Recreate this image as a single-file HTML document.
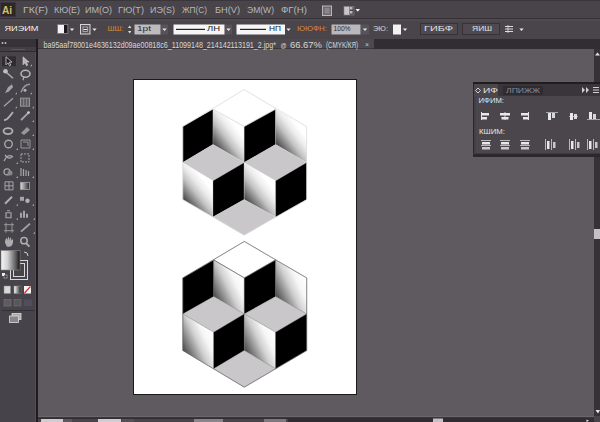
<!DOCTYPE html>
<html><head><meta charset="utf-8">
<style>
*{margin:0;padding:0;box-sizing:border-box}
html,body{width:600px;height:422px;overflow:hidden;background:#5e5a5f;font-family:"Liberation Sans",sans-serif;}
.a{position:absolute}
.t{position:absolute;white-space:nowrap;transform-origin:0 0}
#menubar{left:0;top:0;width:600px;height:18px;background:#48444a;border-top:1px solid #3a363b}
#mline{left:0;top:18px;width:600px;height:3px;background:#4e4a50;border-top:1px solid #353136}
#ctrl{left:0;top:21px;width:600px;height:18px;background:#49454b}
#tabbar{left:38px;top:39px;width:562px;height:10px;background:#312d32}
#tab{left:38px;top:39px;width:336px;height:10px;background:#4d494f;border-bottom:1px solid #3a363b}
#tools{left:0;top:39px;width:36px;height:383px;background:#47434a;border-right:1px solid #524e54}
#toolsb{left:36px;top:39px;width:2px;height:383px;background:#1f1c20}
#toolshead{left:0;top:39px;width:36px;height:8px;background:#363238}
#toolsgrip{left:0;top:47px;width:36px;height:5px;background:#423e43;border-bottom:1px solid #2e2a2f}
#scroll{left:594px;top:49px;width:6px;height:369px;background:#353136}
#thumb{left:594px;top:229px;width:6px;height:10px;background:#c4c2c4}
#status{left:38px;top:416px;width:556px;height:6px;background:#3a363b;border-top:1px solid #2a262b}
#bleed{left:130px;top:75px;width:230px;height:322px;border:1px solid #6c686d}
#artboard{left:133px;top:79px;width:224px;height:316px;background:#fff;border:1px solid #1a1a1a}
#panel{left:473px;top:82px;width:127px;height:75px;background:#444046;border-left:1px solid #2a262b}
#ptop{left:473px;top:82px;width:127px;height:2px;background:#201d21}
#phead{left:474px;top:84px;width:126px;height:12px;background:#39353a}
#ptab1{left:474px;top:84px;width:24px;height:12px;background:#4a464b}
#ptab2{left:503px;top:86px;width:40px;height:9px;background:#2f2b30}
#pbody{left:476px;top:96px;width:124px;height:57px;background:#4a464b}
#pbot{left:473px;top:153px;width:127px;height:4px;background:#2b282c;border-top:1px solid #3e3a3f}
.btn{position:absolute;background:#4f4b50;border:1px solid #353136;border-radius:1px}
.box{position:absolute;background:#c4c2c4}
.wbox{position:absolute;background:#f4f4f4}
.dd{position:absolute;background:#5a565b;border-left:1px solid #3a363b}
</style></head><body>
<div class="a" id="menubar"></div>
<div class="a" id="mline"></div>
<div class="a" id="ctrl"></div>
<div class="a" id="tabbar"></div>
<div class="a" id="tab"></div>
<div class="a" id="tools"></div>
<div class="a" id="toolsb"></div>
<div class="a" id="toolshead"></div>
<div class="a" id="toolsgrip"></div>
<svg class="a" style="left:0;top:0" width="40" height="422"><g opacity="0.82"><rect x="1.5" y="55.8" width="15" height="11" fill="#2b282c" stroke="#4a464b" stroke-width="1"/><path d="M6 56.8 v8 l2-2 1.5 3 1.3-0.7 -1.5-3 h2.7z" fill="#111" stroke="#ddd" stroke-width="0.9"/><path d="M23 56.8 v8 l2-2 1.5 3 1.3-0.7 -1.5-3 h2.7z" fill="#ccc" stroke="#eee" stroke-width="0.6"/><path d="M32 66.3 l-2 0 2 -2z" fill="#bbb"/><path d="M5 71.25 L13 78.25" stroke="#c4c4c4" stroke-width="1.6"/><circle cx="5.5" cy="71.25" r="2.3" fill="#ddd"/><ellipse cx="25.5" cy="73.75" rx="4.5" ry="3.5" fill="none" stroke="#ccc" stroke-width="1.6"/><path d="M24 76.25 l-1 4" stroke="#ccc" stroke-width="1.2"/><path d="M5 93.19999999999999 L8 87.19999999999999 L12 84.19999999999999 L13 87.19999999999999 L9 91.19999999999999z" fill="#bbb"/><path d="M21 92.19999999999999 q3 -8 9 -8" fill="none" stroke="#aaa" stroke-width="1.5"/><circle cx="25" cy="90.19999999999999" r="1.5" fill="#ccc"/><path d="M17 94.19999999999999 l-2 0 2 -2z" fill="#bbb"/><path d="M32 94.19999999999999 l-2 0 2 -2z" fill="#bbb"/><path d="M4 106.14999999999999 L13 98.14999999999999" stroke="#bbb" stroke-width="1.3"/><rect x="20.5" y="98.14999999999999" width="9" height="8" fill="#6a666b" stroke="#aaa" stroke-width="1"/><path d="M23.5 98.14999999999999 v8 M26.5 98.14999999999999 v8" stroke="#999" stroke-width="0.8"/><path d="M17 108.14999999999999 l-2 0 2 -2z" fill="#bbb"/><path d="M34 108.14999999999999 l-2 0 2 -2z" fill="#bbb"/><path d="M4 120.1 q3 0 5 -3 L13 112.1" fill="none" stroke="#c8c8c8" stroke-width="1.8"/><path d="M21 120.1 L29 112.1" stroke="#bbb" stroke-width="2"/><circle cx="28.5" cy="112.6" r="1.3" fill="#eee"/><path d="M34 122.1 l-2 0 2 -2z" fill="#bbb"/><ellipse cx="8" cy="131.05" rx="4.5" ry="3" fill="none" stroke="#c8c8c8" stroke-width="1.8"/><path d="M21 133.05 L27 127.05000000000001 L30 130.05 L24 135.05z" fill="#aaa"/><path d="M34 136.05 l-2 0 2 -2z" fill="#bbb"/><circle cx="8.5" cy="144.0" r="3.8" fill="none" stroke="#bbb" stroke-width="1.4"/><path d="M21 140.0 h9 v8 h-9z M23 142.0 h5 v4" fill="none" stroke="#aaa" stroke-width="1"/><path d="M18 150.0 l-2 0 2 -2z" fill="#bbb"/><path d="M34 150.0 l-2 0 2 -2z" fill="#bbb"/><path d="M4 160.95 q4 -8 9 -4 M5 154.95 q3 5 7 2" fill="none" stroke="#bbb" stroke-width="1.4"/><path d="M21 153.95 h8 v8 h-8z" fill="none" stroke="#bbb" stroke-width="1" stroke-dasharray="2 1"/><path d="M18 163.95 l-2 0 2 -2z" fill="#bbb"/><circle cx="7" cy="171.89999999999998" r="3" fill="none" stroke="#bbb" stroke-width="1.3"/><circle cx="10" cy="172.89999999999998" r="2.5" fill="#999"/><path d="M21 175.89999999999998 v-8 M23.5 175.89999999999998 v-7 M26 175.89999999999998 v-6 M28.5 175.89999999999998 v-5" stroke="#bbb" stroke-width="1.2"/><path d="M18 177.89999999999998 l-2 0 2 -2z" fill="#bbb"/><path d="M34 177.89999999999998 l-2 0 2 -2z" fill="#bbb"/><path d="M5 181.85 h8 v8 h-8z M5 185.85 h8 M9 181.85 v8" fill="none" stroke="#bbb" stroke-width="1"/><rect x="20.5" y="182.35" width="9" height="7" fill="url(#tg)" stroke="#bbb" stroke-width="0.8"/><path d="M5 203.8 L12 196.8" stroke="#c8c8c8" stroke-width="2"/><rect x="20" y="196.8" width="4" height="4" fill="#bbb"/><circle cx="27.5" cy="200.8" r="2.2" fill="#ccc"/><path d="M18 205.8 l-2 0 2 -2z" fill="#bbb"/><path d="M34 205.8 l-2 0 2 -2z" fill="#bbb"/><path d="M6 217.75 v-5 h5 v5z M7 210.75 h3" fill="none" stroke="#bbb" stroke-width="1.2"/><path d="M21 217.75 v-5 M24 217.75 v-7 M27 217.75 v-4" stroke="#c8c8c8" stroke-width="1.8"/><path d="M18 219.75 l-2 0 2 -2z" fill="#bbb"/><path d="M35 219.75 l-2 0 2 -2z" fill="#bbb"/><path d="M4 224.7 h10 M4 230.7 h10 M6 222.7 v10 M12 222.7 v10" stroke="#aaa" stroke-width="1"/><path d="M21 231.7 L30 223.7" stroke="#bbb" stroke-width="1.8"/><path d="M35 233.7 l-2 0 2 -2z" fill="#bbb"/><path d="M5 242.64999999999998 q0 -4 2 -5 v3 q1 -4 2 -4 v4 q1 -4 2 -3 v3 q1 -2 2 -1 v3 q-1 4 -4 4 h-2z" fill="#c4c4c4"/><circle cx="24" cy="240.64999999999998" r="3.2" fill="none" stroke="#c4c4c4" stroke-width="1.5"/><path d="M26 243.14999999999998 l3.5 3.5" stroke="#c4c4c4" stroke-width="2"/></g><linearGradient id="tg" x1="0" x2="1"><stop offset="0" stop-color="#fff"/><stop offset="1" stop-color="#222"/></linearGradient><linearGradient id="fg" x1="0" x2="1"><stop offset="0" stop-color="#f6f6f6"/><stop offset="0.35" stop-color="#d0d0d0"/><stop offset="0.8" stop-color="#555"/><stop offset="1" stop-color="#111"/></linearGradient><rect x="10.5" y="260.5" width="17" height="19" fill="none" stroke="#d8d8d8" stroke-width="1"/><rect x="13.5" y="263.5" width="11" height="13" fill="none" stroke="#d8d8d8" stroke-width="1"/><rect x="1" y="250.5" width="19" height="19.5" fill="url(#fg)" stroke="#888" stroke-width="0.6"/><path d="M24 252 q4 0 4 4" fill="none" stroke="#ccc" stroke-width="1"/><rect x="2" y="273" width="3" height="3" fill="#eee"/><rect x="4" y="275" width="3" height="3" fill="#333" stroke="#ddd" stroke-width="0.5"/><rect x="4" y="286" width="6.5" height="7.5" fill="#d8d8d8" stroke="#888" stroke-width="0.5"/><rect x="14" y="286" width="7" height="7.5" fill="url(#tg)" stroke="#888" stroke-width="0.5"/><rect x="24" y="286" width="7" height="7.5" fill="#f4f4f4"/><path d="M24.5 293 L30.5 286.5" stroke="#c33" stroke-width="1.2"/><rect x="4" y="299.5" width="7" height="6.5" fill="#5e5a60" stroke="#7a767b" stroke-width="0.6"/><rect x="14" y="299.5" width="7" height="6.5" fill="#5a565c" stroke="#747075" stroke-width="0.6"/><rect x="24" y="299.5" width="8" height="6.5" fill="#504e5c"/><path d="M2 310.5 h33" stroke="#333036" stroke-width="1"/><rect x="12" y="313.5" width="9" height="6" fill="#aaa" stroke="#ddd" stroke-width="0.8"/><rect x="9.5" y="316" width="9" height="6.5" fill="#888" stroke="#ddd" stroke-width="0.8"/><circle cx="2.5" cy="43" r="1" fill="#bbb"/><circle cx="5.5" cy="43" r="1" fill="#bbb"/><path d="M11 49.5 h14" stroke="#5a565b" stroke-width="1"/></svg>
<div class="a" id="scroll"></div>
<div class="a" id="thumb"></div>
<svg class="a" style="left:0;top:0" width="600" height="422"><rect x="38" y="416" width="562" height="6" fill="#48444a"/><rect x="38" y="416" width="556" height="1" fill="#6a666c"/><rect x="38" y="417.5" width="556" height="1.2" fill="#2a262b"/><rect x="288" y="418.5" width="306" height="3.5" fill="#302c31"/><rect x="41" y="419" width="22" height="3" fill="#cfcdcf"/><rect x="63" y="419" width="9" height="3" fill="#5b575c"/><rect x="98" y="419" width="23" height="3" fill="#cfcdcf"/><rect x="122" y="419" width="12" height="3" fill="#545055"/><rect x="194" y="419" width="29" height="3" fill="#bdbdbd" opacity="0.55"/><rect x="264" y="419" width="22" height="3" fill="#bdbdbd" opacity="0.45"/><rect x="433" y="418.5" width="10" height="3.5" fill="#c4c2c4"/><path d="M586.5 419.5 l2.5 1.3 -2.5 1.2z" fill="#e6e6e6"/><path d="M595 55.5 l2.5 -3 2.5 3z" fill="#e4e4e4"/><path d="M595.5 410 h4.5 l-2 3.5z" fill="#e6e6e6"/></svg>
<div class="a" id="artboard"></div>

<svg class="a" style="left:0;top:0" width="600" height="40"><rect x="57.5" y="24.5" width="10.5" height="9" fill="#f4f4f4" stroke="#777" stroke-width="0.8"/><rect x="64" y="25" width="3.6" height="8" fill="#1a1a1a"/><path d="M69.8 28.5 h4.4 l-2.2 2.6z" fill="#e6e6e6"/><rect x="80.5" y="24.5" width="9.5" height="9.5" fill="#5a565b" stroke="#d6d6d6" stroke-width="1"/><rect x="83" y="27" width="4.5" height="4.5" fill="#48444a" stroke="#bbb" stroke-width="0.8"/><rect x="83.5" y="29" width="3.5" height="1" fill="#eee"/><path d="M92.3 28.5 h4.4 l-2.2 2.6z" fill="#e6e6e6"/><path d="M128 28 l1.7 -2.4 1.7 2.4z M128 31 l1.7 2.4 1.7 -2.4z" fill="#ddd"/><rect x="134.5" y="24.5" width="26" height="10" fill="#bdbbbe"/><rect x="161" y="24.5" width="7" height="10" fill="#57535a"/><path d="M162.3 28.5 h4.4 l-2.2 2.6z" fill="#e6e6e6"/><rect x="173.5" y="24.5" width="51" height="10" fill="#f6f6f6"/><rect x="176" y="28.8" width="29" height="1.2" fill="#222"/><rect x="225" y="24.5" width="7" height="10" fill="#57535a"/><path d="M226.3 28.5 h4.4 l-2.2 2.6z" fill="#e6e6e6"/><rect x="236.5" y="24.5" width="48.5" height="10" fill="#f6f6f6"/><rect x="240" y="28.8" width="26" height="1.2" fill="#222"/><path d="M286.3 28.5 h4.4 l-2.2 2.6z" fill="#e6e6e6"/><rect x="331.5" y="24.5" width="29" height="10" fill="#bab8bb"/><rect x="361" y="24.5" width="8" height="10" fill="#57535a"/><path d="M362.8 28.5 h4.4 l-2.2 2.6z" fill="#e6e6e6"/><rect x="393" y="24.5" width="8" height="10" fill="#f2f2f2"/><path d="M402.8 28.5 h4.4 l-2.2 2.6z" fill="#e6e6e6"/><rect x="420.5" y="23.5" width="37" height="11" fill="#4e4a4f" stroke="#363237" stroke-width="1"/><rect x="462.5" y="23.5" width="37" height="11" fill="#4e4a4f" stroke="#363237" stroke-width="1"/><path d="M505 26.5 h8 M505 29 h8 M505 31.5 h8" stroke="#ddd" stroke-width="1"/><path d="M508 25 v8" stroke="#ddd" stroke-width="0.8"/><path d="M519.3 28.5 h4.4 l-2.2 2.6z" fill="#e6e6e6"/></svg>
<!-- menubar icons -->
<div class="a" style="left:0;top:2px;width:16px;height:15px;background:#2e2722;border:1px solid #3b3245"></div>
<div class="t" style="left:2px;top:3.5px;font-size:11.5px;line-height:12px;font-weight:bold;color:#d2c070;transform:scaleX(0.88)">Ai</div>
<svg class="a" style="left:0;top:0" width="400" height="20">
<rect x="322.5" y="6" width="9" height="9.5" fill="#6e6a70" stroke="#b8b8b8" stroke-width="1"/>
<rect x="324.5" y="8" width="5" height="5.5" fill="#8a868b"/>
<rect x="344" y="6.5" width="5.5" height="8.5" fill="#c8c6c8"/>
<rect x="350" y="7" width="2.5" height="2.5" fill="#bbb"/><rect x="350" y="11" width="2.5" height="2.5" fill="#bbb"/>
<rect x="344" y="6.5" width="10" height="8.5" fill="none" stroke="#8a868b" stroke-width="0.6"/>
<path d="M355.5 9 h4.5 l-2.25 2.8z" fill="#f0f0f0"/>
</svg>

<svg class="a" style="left:0;top:0" width="600" height="422" viewBox="0 0 600 422">
<defs><linearGradient id="ta" gradientUnits="userSpaceOnUse" x1="213.00" y1="144.50" x2="242.02" y2="122.90"><stop offset="0" stop-color="#404040"/><stop offset="0.2" stop-color="#828282"/><stop offset="0.4" stop-color="#c4c4c4"/><stop offset="0.6" stop-color="#ebebeb"/><stop offset="0.8" stop-color="#fff"/></linearGradient><linearGradient id="tb" gradientUnits="userSpaceOnUse" x1="275.60" y1="144.50" x2="304.43" y2="122.90"><stop offset="0" stop-color="#404040"/><stop offset="0.2" stop-color="#828282"/><stop offset="0.4" stop-color="#c4c4c4"/><stop offset="0.6" stop-color="#ebebeb"/><stop offset="0.8" stop-color="#fff"/></linearGradient><linearGradient id="tc" gradientUnits="userSpaceOnUse" x1="182.80" y1="199.60" x2="210.89" y2="177.04"><stop offset="0" stop-color="#404040"/><stop offset="0.2" stop-color="#828282"/><stop offset="0.4" stop-color="#c4c4c4"/><stop offset="0.6" stop-color="#ebebeb"/><stop offset="0.8" stop-color="#fff"/></linearGradient><linearGradient id="td" gradientUnits="userSpaceOnUse" x1="244.20" y1="199.60" x2="273.40" y2="177.04"><stop offset="0" stop-color="#404040"/><stop offset="0.2" stop-color="#828282"/><stop offset="0.4" stop-color="#c4c4c4"/><stop offset="0.6" stop-color="#ebebeb"/><stop offset="0.8" stop-color="#fff"/></linearGradient><linearGradient id="ba" gradientUnits="userSpaceOnUse" x1="213.70" y1="296.50" x2="244.30" y2="281.62"><stop offset="0" stop-color="#484848"/><stop offset="0.25" stop-color="#8c8c8c"/><stop offset="0.5" stop-color="#d0d0d0"/><stop offset="0.75" stop-color="#f6f6f6"/><stop offset="1" stop-color="#fff"/></linearGradient><linearGradient id="bb" gradientUnits="userSpaceOnUse" x1="275.60" y1="296.50" x2="306.70" y2="281.62"><stop offset="0" stop-color="#484848"/><stop offset="0.25" stop-color="#8c8c8c"/><stop offset="0.5" stop-color="#d0d0d0"/><stop offset="0.75" stop-color="#f6f6f6"/><stop offset="1" stop-color="#fff"/></linearGradient><linearGradient id="bc" gradientUnits="userSpaceOnUse" x1="182.80" y1="350.50" x2="213.70" y2="335.94"><stop offset="0" stop-color="#484848"/><stop offset="0.25" stop-color="#8c8c8c"/><stop offset="0.5" stop-color="#d0d0d0"/><stop offset="0.75" stop-color="#f6f6f6"/><stop offset="1" stop-color="#fff"/></linearGradient><linearGradient id="bd" gradientUnits="userSpaceOnUse" x1="244.30" y1="350.50" x2="275.60" y2="335.94"><stop offset="0" stop-color="#484848"/><stop offset="0.25" stop-color="#8c8c8c"/><stop offset="0.5" stop-color="#d0d0d0"/><stop offset="0.75" stop-color="#f6f6f6"/><stop offset="1" stop-color="#fff"/></linearGradient></defs>
<polygon points="244.20,89.50 275.60,109.20 244.20,126.50 213.00,109.20" fill="#fff" stroke="#d8d8d8" stroke-opacity="0.55" stroke-width="0.48" stroke-linejoin="round"/><polygon points="182.80,126.50 213.00,109.20 213.00,144.50 182.80,162.60" fill="#000" stroke="#d8d8d8" stroke-opacity="0.55" stroke-width="0.48" stroke-linejoin="round"/><polygon points="213.00,109.20 244.20,126.50 244.20,162.60 213.00,144.50" fill="url(#ta)" stroke="#d8d8d8" stroke-opacity="0.55" stroke-width="0.48" stroke-linejoin="round"/><polygon points="244.20,126.50 275.60,109.20 275.60,144.50 244.20,162.60" fill="#000" stroke="#d8d8d8" stroke-opacity="0.55" stroke-width="0.48" stroke-linejoin="round"/><polygon points="275.60,109.20 306.60,126.50 306.60,162.60 275.60,144.50" fill="url(#tb)" stroke="#d8d8d8" stroke-opacity="0.55" stroke-width="0.48" stroke-linejoin="round"/><polygon points="213.00,144.50 244.20,162.60 213.00,180.80 182.80,162.60" fill="#c9c7ca" stroke="#d8d8d8" stroke-opacity="0.55" stroke-width="0.48" stroke-linejoin="round"/><polygon points="275.60,144.50 306.60,162.60 275.60,180.80 244.20,162.60" fill="#c9c7ca" stroke="#d8d8d8" stroke-opacity="0.55" stroke-width="0.48" stroke-linejoin="round"/><polygon points="182.80,162.60 213.00,180.80 213.00,217.10 182.80,199.60" fill="url(#tc)" stroke="#d8d8d8" stroke-opacity="0.55" stroke-width="0.48" stroke-linejoin="round"/><polygon points="213.00,180.80 244.20,162.60 244.20,199.60 213.00,217.10" fill="#000" stroke="#d8d8d8" stroke-opacity="0.55" stroke-width="0.48" stroke-linejoin="round"/><polygon points="244.20,162.60 275.60,180.80 275.60,217.10 244.20,199.60" fill="url(#td)" stroke="#d8d8d8" stroke-opacity="0.55" stroke-width="0.48" stroke-linejoin="round"/><polygon points="275.60,180.80 306.60,162.60 306.60,199.60 275.60,217.10" fill="#000" stroke="#d8d8d8" stroke-opacity="0.55" stroke-width="0.48" stroke-linejoin="round"/><polygon points="244.20,199.60 275.60,217.10 244.20,235.20 213.00,217.10" fill="#c9c7ca" stroke="#d8d8d8" stroke-opacity="0.55" stroke-width="0.48" stroke-linejoin="round"/><polygon points="244.20,89.50 306.60,126.50 306.60,199.60 244.20,235.20 182.80,199.60 182.80,126.50" fill="none" stroke="#d8d8d8" stroke-width="0.6"/><polyline points="213.00,109.20 244.20,126.50 275.60,109.20" fill="none" stroke="#d8d8d8" stroke-width="0.6"/><polygon points="244.30,241.40 275.60,259.90 244.30,277.90 213.70,259.90" fill="#fff" stroke="#5a5a5a" stroke-opacity="0.55" stroke-width="0.48" stroke-linejoin="round"/><polygon points="182.80,277.90 213.70,259.90 213.70,296.50 182.80,314.00" fill="#000" stroke="#5a5a5a" stroke-opacity="0.55" stroke-width="0.48" stroke-linejoin="round"/><polygon points="213.70,259.90 244.30,277.90 244.30,314.00 213.70,296.50" fill="url(#ba)" stroke="#5a5a5a" stroke-opacity="0.55" stroke-width="0.48" stroke-linejoin="round"/><polygon points="244.30,277.90 275.60,259.90 275.60,296.50 244.30,314.00" fill="#000" stroke="#5a5a5a" stroke-opacity="0.55" stroke-width="0.48" stroke-linejoin="round"/><polygon points="275.60,259.90 306.70,277.90 306.70,314.00 275.60,296.50" fill="url(#bb)" stroke="#5a5a5a" stroke-opacity="0.55" stroke-width="0.48" stroke-linejoin="round"/><polygon points="213.70,296.50 244.30,314.00 213.70,332.30 182.80,314.00" fill="#c9c7ca" stroke="#5a5a5a" stroke-opacity="0.55" stroke-width="0.48" stroke-linejoin="round"/><polygon points="275.60,296.50 306.70,314.00 275.60,332.30 244.30,314.00" fill="#c9c7ca" stroke="#5a5a5a" stroke-opacity="0.55" stroke-width="0.48" stroke-linejoin="round"/><polygon points="182.80,314.00 213.70,332.30 213.70,368.80 182.80,350.50" fill="url(#bc)" stroke="#5a5a5a" stroke-opacity="0.55" stroke-width="0.48" stroke-linejoin="round"/><polygon points="213.70,332.30 244.30,314.00 244.30,350.50 213.70,368.80" fill="#000" stroke="#5a5a5a" stroke-opacity="0.55" stroke-width="0.48" stroke-linejoin="round"/><polygon points="244.30,314.00 275.60,332.30 275.60,368.80 244.30,350.50" fill="url(#bd)" stroke="#5a5a5a" stroke-opacity="0.55" stroke-width="0.48" stroke-linejoin="round"/><polygon points="275.60,332.30 306.70,314.00 306.70,350.50 275.60,368.80" fill="#000" stroke="#5a5a5a" stroke-opacity="0.55" stroke-width="0.48" stroke-linejoin="round"/><polygon points="244.30,350.50 275.60,368.80 244.30,387.20 213.70,368.80" fill="#c9c7ca" stroke="#5a5a5a" stroke-opacity="0.55" stroke-width="0.48" stroke-linejoin="round"/><polygon points="244.30,241.40 306.70,277.90 306.70,350.50 244.30,387.20 182.80,350.50 182.80,277.90" fill="none" stroke="#5a5a5a" stroke-width="0.6"/><polyline points="213.70,259.90 244.30,277.90 275.60,259.90" fill="none" stroke="#5a5a5a" stroke-width="0.6"/>
</svg>

<div class="a" id="panel"></div>
<div class="a" id="ptop"></div>
<div class="a" id="phead"></div>
<div class="a" id="ptab1"></div>
<div class="a" id="ptab2"></div>
<div class="a" id="pbody"></div>
<div class="a" id="pbot"></div>
<svg class="a" style="left:0;top:0" width="600" height="422"><rect x="481" y="112" width="1" height="8" fill="#e8e8e8" opacity="1"/><rect x="482" y="113" width="7" height="2.5" fill="#e8e8e8" opacity="1"/><rect x="482" y="117" width="5" height="2.5" fill="#e8e8e8" opacity="1"/><rect x="504.5" y="112" width="1" height="8" fill="#e8e8e8" opacity="0.8"/><rect x="500" y="113" width="10" height="2.5" fill="#e8e8e8" opacity="1"/><rect x="501.5" y="117" width="7" height="2.5" fill="#e8e8e8" opacity="1"/><rect x="528" y="112" width="1" height="8" fill="#e8e8e8" opacity="1"/><rect x="521" y="113" width="7" height="2.5" fill="#e8e8e8" opacity="1"/><rect x="523" y="117" width="5" height="2.5" fill="#e8e8e8" opacity="1"/><rect x="546" y="112" width="12" height="1" fill="#e8e8e8" opacity="0.6"/><rect x="548" y="113" width="3" height="7" fill="#e8e8e8" opacity="1"/><rect x="552" y="113" width="3" height="5" fill="#e8e8e8" opacity="0.9"/><rect x="569" y="116" width="9" height="1" fill="#e8e8e8" opacity="0.6"/><rect x="570" y="113" width="3" height="7" fill="#e8e8e8" opacity="1"/><rect x="574" y="114" width="3" height="5" fill="#e8e8e8" opacity="0.9"/><rect x="587" y="119" width="13" height="1" fill="#e8e8e8" opacity="0.6"/><rect x="589" y="112" width="3" height="7" fill="#e8e8e8" opacity="1"/><rect x="593" y="114" width="3" height="5" fill="#e8e8e8" opacity="0.9"/><rect x="481" y="140" width="10" height="1" fill="#e8e8e8" opacity="0.7"/><rect x="482" y="142" width="8" height="2.5" fill="#e8e8e8" opacity="1"/><rect x="481" y="145" width="10" height="1" fill="#e8e8e8" opacity="0.7"/><rect x="482" y="147" width="8" height="2.5" fill="#e8e8e8" opacity="0.8"/><rect x="500" y="140" width="10" height="1" fill="#e8e8e8" opacity="0.7"/><rect x="501" y="142" width="8" height="2.5" fill="#e8e8e8" opacity="1"/><rect x="500" y="145" width="10" height="1" fill="#e8e8e8" opacity="0.7"/><rect x="501" y="147" width="8" height="2.5" fill="#e8e8e8" opacity="0.8"/><rect x="520" y="140" width="10" height="1" fill="#e8e8e8" opacity="0.7"/><rect x="521" y="142" width="8" height="2.5" fill="#e8e8e8" opacity="1"/><rect x="520" y="145" width="10" height="1" fill="#e8e8e8" opacity="0.7"/><rect x="521" y="147" width="8" height="2.5" fill="#e8e8e8" opacity="0.8"/><rect x="545" y="139" width="1" height="11" fill="#e8e8e8" opacity="0.7"/><rect x="547" y="141" width="2.5" height="8" fill="#e8e8e8" opacity="1"/><rect x="551" y="139" width="1" height="11" fill="#e8e8e8" opacity="0.7"/><rect x="553" y="142" width="2.5" height="6" fill="#e8e8e8" opacity="0.8"/><rect x="569" y="139" width="1" height="11" fill="#e8e8e8" opacity="0.7"/><rect x="571" y="141" width="2.5" height="8" fill="#e8e8e8" opacity="1"/><rect x="575" y="139" width="1" height="11" fill="#e8e8e8" opacity="0.7"/><rect x="577" y="142" width="2.5" height="6" fill="#e8e8e8" opacity="0.8"/><rect x="587" y="139" width="1" height="11" fill="#e8e8e8" opacity="0.7"/><rect x="589" y="141" width="2.5" height="8" fill="#e8e8e8" opacity="1"/><rect x="593" y="139" width="1" height="11" fill="#e8e8e8" opacity="0.7"/><rect x="595" y="142" width="2.5" height="6" fill="#e8e8e8" opacity="0.8"/><path d="M582 87 l3 3 -3 3z M586 87 l3 3 -3 3z" fill="#cfcfcf"/><rect x="593" y="87" width="6" height="1" fill="#cfcfcf" opacity="1"/><rect x="593" y="89.5" width="6" height="1" fill="#cfcfcf" opacity="1"/><rect x="593" y="92" width="6" height="1" fill="#cfcfcf" opacity="1"/><path d="M478 88 l2.5 2.5 -2.5 2.5 -2.5 -2.5z" fill="none" stroke="#ddd" stroke-width="0.9"/></svg>
<svg class="a" style="left:0;top:0" width="600" height="422" font-family="Liberation Sans, sans-serif">
<text x="23" y="13.20" font-size="8.5" fill="#b8b8b8" textLength="25" lengthAdjust="spacingAndGlyphs">ГК(F)</text>
<text x="54" y="13.20" font-size="8.5" fill="#b8b8b8" textLength="26" lengthAdjust="spacingAndGlyphs">КЮ(E)</text>
<text x="85" y="13.20" font-size="8.5" fill="#b8b8b8" textLength="27" lengthAdjust="spacingAndGlyphs">ИМ(O)</text>
<text x="118" y="13.20" font-size="8.5" fill="#b8b8b8" textLength="26" lengthAdjust="spacingAndGlyphs">ГЮ(T)</text>
<text x="150" y="13.20" font-size="8.5" fill="#b8b8b8" textLength="25" lengthAdjust="spacingAndGlyphs">ИЭ(S)</text>
<text x="182" y="13.20" font-size="8.5" fill="#b8b8b8" textLength="25" lengthAdjust="spacingAndGlyphs">ЖП(C)</text>
<text x="215" y="13.20" font-size="8.5" fill="#b8b8b8" textLength="25" lengthAdjust="spacingAndGlyphs">БН(V)</text>
<text x="247" y="13.20" font-size="8.5" fill="#b8b8b8" textLength="27" lengthAdjust="spacingAndGlyphs">ЭМ(W)</text>
<text x="281" y="13.20" font-size="8.5" fill="#b8b8b8" textLength="26" lengthAdjust="spacingAndGlyphs">ФГ(H)</text>
<text x="4.5" y="30.78" font-size="8" fill="#f2f2f2" textLength="34" lengthAdjust="spacingAndGlyphs">ЯИЭИМ</text>
<text x="107.5" y="30.78" font-size="8" fill="#d88c34" textLength="16" lengthAdjust="spacingAndGlyphs">ШШ:</text>
<text x="137" y="31.28" font-size="8" fill="#2a2a2a" textLength="14" lengthAdjust="spacingAndGlyphs">1pt</text>
<text x="207" y="31.28" font-size="8" fill="#222" textLength="13" lengthAdjust="spacingAndGlyphs">ЛН</text>
<text x="269" y="31.28" font-size="8" fill="#222" textLength="12" lengthAdjust="spacingAndGlyphs">НП</text>
<text x="297" y="30.78" font-size="8" fill="#d88c34" textLength="30" lengthAdjust="spacingAndGlyphs">ЮЮФН:</text>
<text x="333.5" y="31.35" font-size="7.5" fill="#2a2a2a" textLength="17" lengthAdjust="spacingAndGlyphs">100%</text>
<text x="373" y="30.78" font-size="8" fill="#d8d8d8" textLength="15" lengthAdjust="spacingAndGlyphs">ЭЮ:</text>
<text x="424" y="30.78" font-size="8" fill="#e0e0e0" textLength="29" lengthAdjust="spacingAndGlyphs">ГИБФ</text>
<text x="472" y="30.78" font-size="8" fill="#e0e0e0" textLength="20" lengthAdjust="spacingAndGlyphs">ЯИШ</text>
<text x="43.5" y="47.70" font-size="8.5" fill="#d6d6d6" textLength="232.5" lengthAdjust="spacingAndGlyphs">ba95aaf78001e4636132d09ae00818c6_11099148_214142113191_2.jpg*</text>
<text x="280.5" y="47.78" font-size="8" fill="#d6d6d6" textLength="6" lengthAdjust="spacingAndGlyphs">@</text>
<text x="290" y="47.70" font-size="8.5" fill="#d6d6d6" textLength="32" lengthAdjust="spacingAndGlyphs">66.67%</text>
<text x="326" y="47.70" font-size="8.5" fill="#d6d6d6" textLength="32" lengthAdjust="spacingAndGlyphs">(CMYK/КЯ)</text>
<text x="365" y="47.28" font-size="8" fill="#cfcfcf" textLength="4" lengthAdjust="spacingAndGlyphs">×</text>
<text x="483" y="92.85" font-size="7.5" fill="#e0e0e0" textLength="15" lengthAdjust="spacingAndGlyphs">ИФ</text>
<text x="506" y="92.85" font-size="7.5" fill="#8e8a8f" textLength="34" lengthAdjust="spacingAndGlyphs">ЛПИЖЖ</text>
<text x="478.5" y="103.43" font-size="7" fill="#e6e6e6" textLength="25.5" lengthAdjust="spacingAndGlyphs">ИФИМ:</text>
<text x="479" y="134.43" font-size="7" fill="#e6e6e6" textLength="26" lengthAdjust="spacingAndGlyphs">КШИМ:</text>
</svg>
</body></html>
